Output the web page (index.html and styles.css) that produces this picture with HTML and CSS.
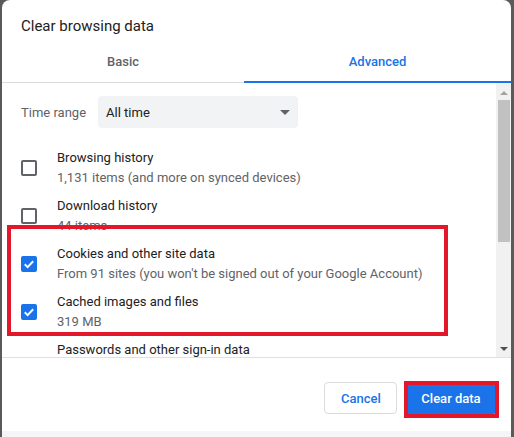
FILE: index.html
```html
<!DOCTYPE html>
<html>
<head>
<meta charset="utf-8">
<link rel="stylesheet" href="styles.css">
</head>
<body>
<div class="dialog">
  <div class="title">Clear browsing data</div>
  <div class="tabs">
    <div class="tab">Basic</div>
    <div class="tab active">Advanced</div>
  </div>
  <div class="body">
    <div class="content">
      <div class="range">
        <span class="range-label">Time range</span>
        <div class="select">
          <span>All time</span>
          <svg class="caret" width="10" height="5" viewBox="0 0 10 5"><path d="M0 0h10L5 5z" fill="#5f6368"/></svg>
        </div>
      </div>
      <div class="row">
        <span class="cb"></span>
        <div class="txt"><div class="t">Browsing history</div><div class="s">1,131 items (and more on synced devices)</div></div>
      </div>
      <div class="row">
        <span class="cb"></span>
        <div class="txt"><div class="t">Download history</div><div class="s">44 items</div></div>
      </div>
      <div class="row">
        <span class="cb on"><svg width="16" height="16" viewBox="0 0 16 16"><path d="M3.8 8.3l2.8 2.8 5.6-5.8" fill="none" stroke="#fff" stroke-width="2"/></svg></span>
        <div class="txt"><div class="t">Cookies and other site data</div><div class="s">From 91 sites (you won't be signed out of your Google Account)</div></div>
      </div>
      <div class="row">
        <span class="cb on"><svg width="16" height="16" viewBox="0 0 16 16"><path d="M3.8 8.3l2.8 2.8 5.6-5.8" fill="none" stroke="#fff" stroke-width="2"/></svg></span>
        <div class="txt"><div class="t">Cached images and files</div><div class="s">319 MB</div></div>
      </div>
      <div class="row last">
        <span class="cb hidden"></span>
        <div class="txt"><div class="t">Passwords and other sign-in data</div></div>
      </div>
    </div>
    <div class="scrollbar">
      <svg class="arrow" width="8" height="4" viewBox="0 0 8 4"><path d="M0 4h8L4 0z" fill="#a3a3a3"/></svg>
      <div class="thumb"></div>
      <svg class="arrow down" width="8" height="4" viewBox="0 0 8 4"><path d="M0 0h8L4 4z" fill="#505050"/></svg>
    </div>
  </div>
  <div class="footer">
    <button class="btn cancel">Cancel</button>
    <button class="btn primary">Clear data</button>
  </div>
  <div class="bottom"></div>
  <div class="mark mark-list"></div>
  <div class="mark mark-btn"></div>
</div>
</body>
</html>
```

FILE: styles.css
```css
* { box-sizing: border-box; }
html, body { margin: 0; padding: 0; }
body {
  background: #5a5a5a;
  width: 514px;
  height: 437px;
  overflow: hidden;
  font-family: Roboto, "Liberation Sans", sans-serif;
  font-size: 13px;
  color: #202124;
}
.dialog {
  position: relative;
  margin-left: 2px;
  width: 509px;
  height: 437px;
  background: #fff;
  border-radius: 8px 8px 0 0;
  display: flex;
  flex-direction: column;
}
.title {
  padding: 16px 0 8px 19px;
  font-size: 15px;
  line-height: 20px;
  color: #202124;
}
.tabs {
  display: grid;
  grid-template-columns: 242px 1fr;
}
.tab {
  height: 39px;
  padding-top: 9px;
  line-height: 18px;
  text-align: center;
  font-weight: 500;
  color: #5f6368;
  border-bottom: 1px solid #dadce0;
}
.tab.active {
  color: #1a73e8;
  border-bottom: 2px solid #1a73e8;
}
.body {
  display: flex;
  height: 275px;
  border-bottom: 1px solid #e0e0e0;
  overflow: hidden;
}
.content {
  flex: 1;
  padding-left: 19px;
  overflow: hidden;
}
.range {
  display: flex;
  align-items: center;
  gap: 12px;
  margin-top: 13px;
}
.range-label { color: #5f6368; }
.select {
  width: 200px;
  height: 32px;
  background: #f1f3f4;
  border-radius: 4px;
  display: flex;
  align-items: center;
  justify-content: space-between;
  padding: 0 8px 0 8px;
  color: #202124;
}
.row {
  display: flex;
  align-items: center;
  gap: 20px;
  padding: 4px 0;
}
.range + .row { margin-top: 16px; }
.row.last { align-items: flex-start; }
.cb {
  width: 16px;
  height: 16px;
  border: 2px solid #5f6368;
  border-radius: 2px;
  flex: none;
  display: flex;
}
.cb.on {
  border: none;
  background: #1a73e8;
}
.cb.hidden { visibility: hidden; }
.txt .t, .txt .s { line-height: 20px; white-space: nowrap; }
.txt .t { color: #202124; }
.txt .s { color: #5f6368; }
.scrollbar {
  width: 15px;
  background: #f1f1f1;
  display: flex;
  flex-direction: column;
  align-items: center;
  padding-top: 8px;
}
.arrow { flex: none; }
.thumb {
  width: 12px;
  height: 142px;
  background: #c1c1c1;
  margin-top: 5px;
}
.arrow.down { margin-top: auto; margin-bottom: 6px; }
.footer {
  display: flex;
  justify-content: flex-end;
  gap: 8px;
  padding: 24px 14px 0 0;
  flex: 1;
}
.btn {
  height: 32px;
  border-radius: 4px;
  font-family: Roboto, "Liberation Sans", sans-serif;
  font-size: 13px;
  font-weight: 500;
  padding: 0 16px;
}
.cancel {
  width: 73px;
  background: #fff;
  color: #1a73e8;
  border: 1px solid #dadce0;
}
.primary {
  width: 92px;
  background: #1a73e8;
  color: #fff;
  border: none;
}
.bottom {
  height: 6px;
  background: #f5f5f7;
}
.mark {
  position: absolute;
  border: 4px solid #e3172a;
  pointer-events: none;
}
.mark-list { left: 5px; top: 225px; width: 441px; height: 111px; }
.mark-btn { left: 402px; top: 381px; width: 95px; height: 37px; }
```
